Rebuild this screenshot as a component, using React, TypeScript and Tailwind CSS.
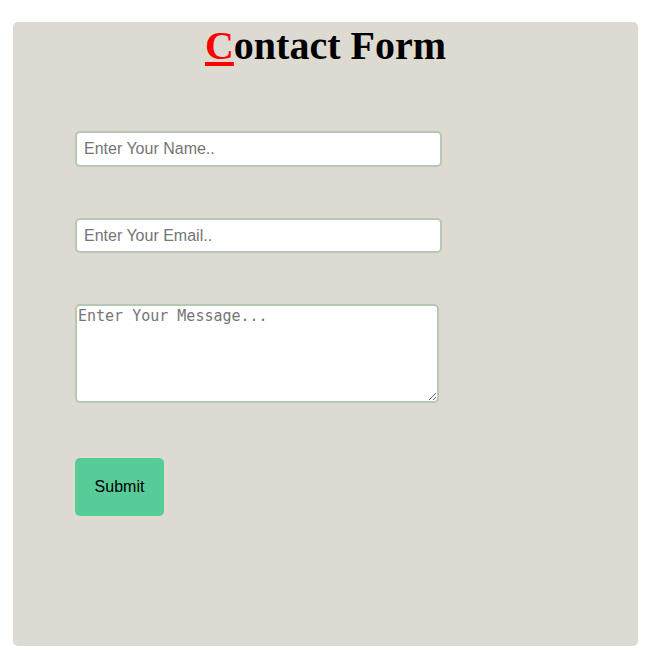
import React from 'react';

const App: React.FC = () => {
  return (
    <div className="min-h-[664px] bg-white pt-[22px] pl-[13px] pr-[15px]">
      <form className="h-[624px] rounded-[5px] bg-[#dddad2] pl-[62px] pt-[1px]">
        <h1 className="-ml-[62px] text-center font-['Liberation_Serif',serif] text-[40px] font-bold leading-[46px] text-black">
          <span className="text-[#ff0000] underline decoration-[4px] underline-offset-[3px]">C</span>ontact Form
        </h1>

        <input
          type="text"
          placeholder="Enter Your Name.."
          className="mt-[62px] block h-[36px] w-[367px] rounded-[5px] border-2 border-[#b5c8b3] bg-white px-[7px] font-['Liberation_Sans',Arial,sans-serif] text-[16px] text-black outline-none placeholder:text-[#757575]"
        />

        <input
          type="email"
          placeholder="Enter Your Email.."
          className="mt-[51px] block h-[35px] w-[367px] rounded-[5px] border-2 border-[#b5c8b3] bg-white px-[7px] font-['Liberation_Sans',Arial,sans-serif] text-[16px] text-black outline-none placeholder:text-[#757575]"
        />

        <textarea
          placeholder="Enter Your Message..."
          className="mt-[51px] block h-[99px] w-[364px] rounded-[5px] border-2 border-[#b5c8b3] bg-white px-[1px] py-0 font-['DejaVu_Sans_Mono',monospace] text-[15px] leading-[20px] text-black outline-none placeholder:text-[#757575]"
        />

        <button
          type="button"
          className="mt-[55px] block h-[58px] w-[89px] rounded-[5px] bg-[#57cc99] font-['Liberation_Sans',Arial,sans-serif] text-[16px] text-black"
        >
          Submit
        </button>
      </form>
    </div>
  );
};

export default App;
